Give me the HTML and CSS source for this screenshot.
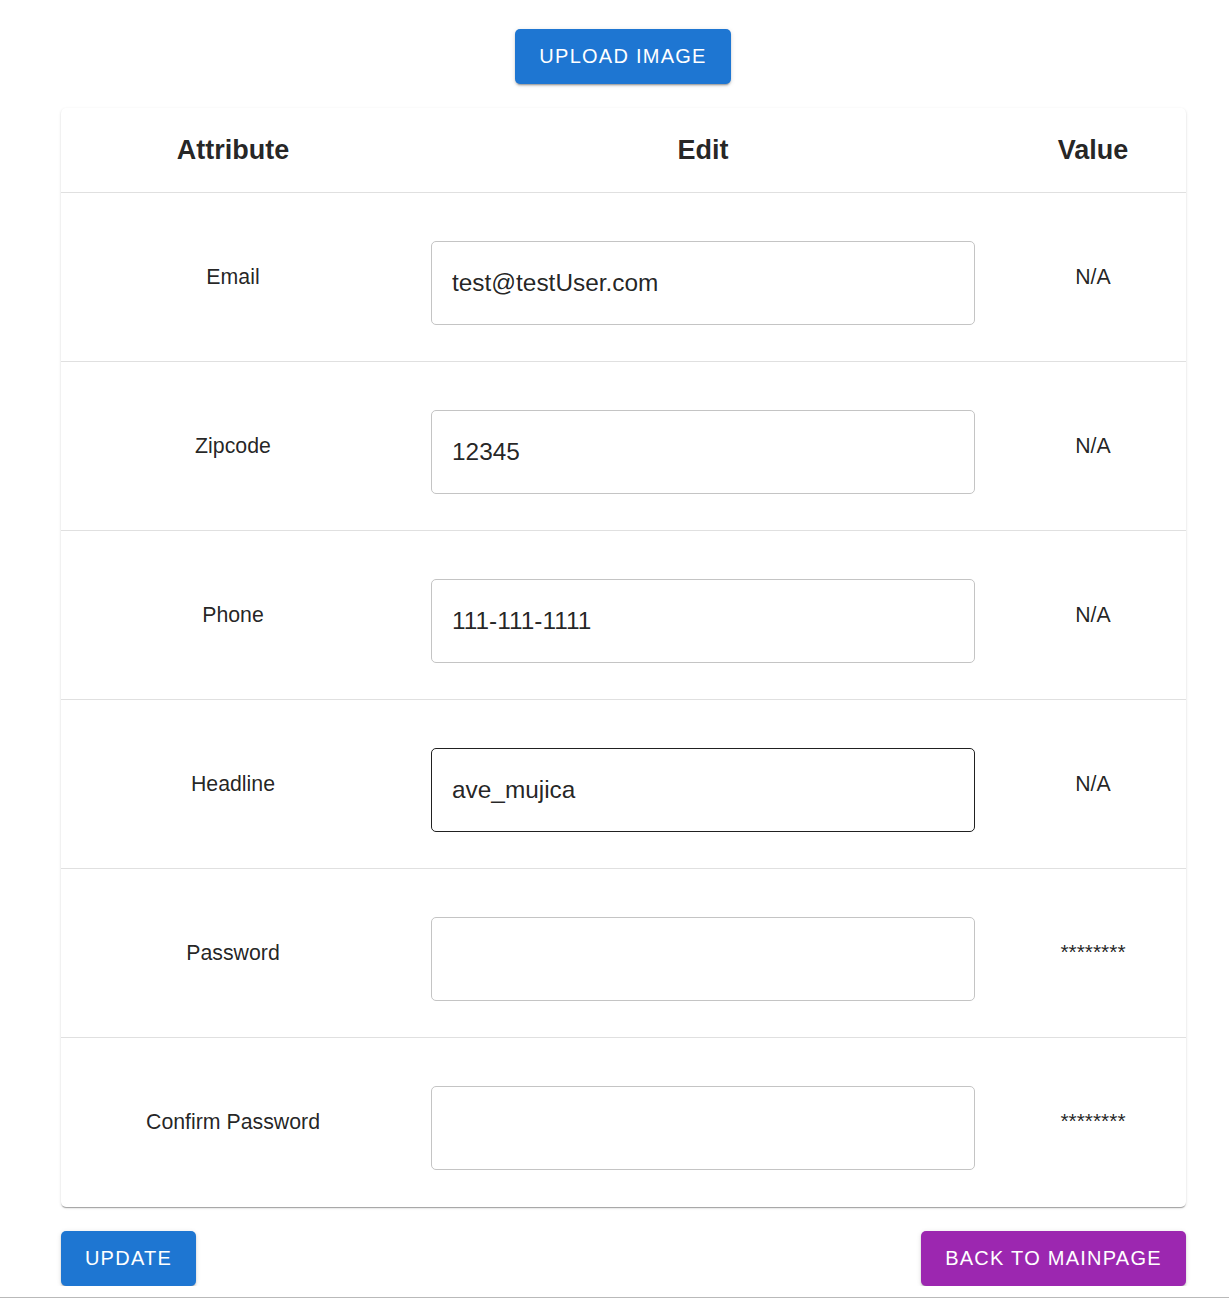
FILE: index.html
```html
<!DOCTYPE html>
<html lang="en">
<head>
<meta charset="utf-8">
<title>Edit Profile</title>
<link rel="stylesheet" href="styles.css">
</head>
<body>
<div class="page">
  <div class="avatar-alt">Avatar</div>
  <button class="btn btn-primary btn-upload">Upload Image</button>

  <div class="card">
    <div class="row head">
      <div class="cell">Attribute</div>
      <div class="cell">Edit</div>
      <div class="cell">Value</div>
    </div>
    <div class="row">
      <div class="cell label">Email</div>
      <div class="cell"><div class="field">test@testUser.com</div></div>
      <div class="cell value">N/A</div>
    </div>
    <div class="row">
      <div class="cell label">Zipcode</div>
      <div class="cell"><div class="field">12345</div></div>
      <div class="cell value">N/A</div>
    </div>
    <div class="row">
      <div class="cell label">Phone</div>
      <div class="cell"><div class="field">111-111-1111</div></div>
      <div class="cell value">N/A</div>
    </div>
    <div class="row">
      <div class="cell label">Headline</div>
      <div class="cell"><div class="field field-hover">ave_mujica</div></div>
      <div class="cell value">N/A</div>
    </div>
    <div class="row">
      <div class="cell label">Password</div>
      <div class="cell"><div class="field"></div></div>
      <div class="cell value stars">********</div>
    </div>
    <div class="row last">
      <div class="cell label">Confirm Password</div>
      <div class="cell"><div class="field"></div></div>
      <div class="cell value stars">********</div>
    </div>
  </div>

  <div class="actions">
    <button class="btn btn-primary btn-update">Update</button>
    <button class="btn btn-secondary btn-back">Back to Mainpage</button>
  </div>
</div>
<div class="viewport-edge"></div>
</body>
</html>
```

FILE: styles.css
```css
* { box-sizing: border-box; }

html, body {
  margin: 0;
  padding: 0;
  background: #ffffff;
  font-family: "Liberation Sans", Arial, Helvetica, sans-serif;
  color: rgba(0, 0, 0, 0.87);
}

.page {
  width: 1125px;
  margin-left: 61px;
  display: flex;
  flex-direction: column;
  align-items: center;
}

.avatar-alt {
  font-size: 12px;
  line-height: 12px;
  height: 2px;
  overflow: hidden;
  display: flex;
  align-items: flex-end;
  margin-bottom: 27px;
}

.btn {
  font-family: "Liberation Sans", Arial, Helvetica, sans-serif;
  font-size: 20px;
  font-weight: 400;
  letter-spacing: 1.25px;
  text-transform: uppercase;
  color: #ffffff;
  border: none;
  border-radius: 5px;
  height: 55px;
  padding: 0 24px;
  cursor: pointer;
  box-shadow: 0px 3px 1px -2px rgba(0,0,0,0.2), 0px 2px 2px 0px rgba(0,0,0,0.14), 0px 1px 5px 0px rgba(0,0,0,0.12);
}

.btn-primary { background: #1e76d2; }
.btn-secondary { background: #9c27b0; }

.btn-upload {
  width: 216px;
  padding: 0;
  margin-right: 1px;
}

.card {
  width: 1125px;
  margin-top: 24px;
  background: #fff;
  border-radius: 5px;
  box-shadow: 0px 2px 1px -1px rgba(0,0,0,0.2), 0px 1px 1px 0px rgba(0,0,0,0.14), 0px 1px 3px 0px rgba(0,0,0,0.12);
}

.row {
  display: grid;
  grid-template-columns: 345px 594px 186px;
  height: 169px;
  border-bottom: 1px solid #e0e0e0;
}

.row.last {
  border-bottom: none;
  height: 169px;
}

.row.head {
  height: 85px;
}

.cell {
  display: flex;
  align-items: center;
  justify-content: center;
}

.row .cell:first-child {
  padding-right: 1px;
}

.head .cell {
  font-size: 27px;
  font-weight: 700;
  color: rgba(0, 0, 0, 0.87);
}

.label, .value {
  font-size: 21.3px;
}

.stars {
  font-size: 20.9px;
  padding-bottom: 3px;
}

.field {
  width: 544px;
  height: 84px;
  margin-top: 11px;
  border: 1px solid #c4c4c4;
  border-radius: 5px;
  padding: 0 20px;
  display: flex;
  align-items: center;
  font-size: 24.4px;
  color: rgba(0, 0, 0, 0.87);
}

.field-hover {
  border-color: rgba(0, 0, 0, 0.87);
}

.actions {
  width: 100%;
  margin-top: 24px;
  display: flex;
  justify-content: space-between;
}

.btn-update { width: 135px; padding: 0; }
.btn-back { width: 265px; padding: 0; }

.viewport-edge {
  position: fixed;
  left: 0;
  right: 0;
  bottom: 0;
  height: 1px;
  background: #b9b9b9;
}
```
